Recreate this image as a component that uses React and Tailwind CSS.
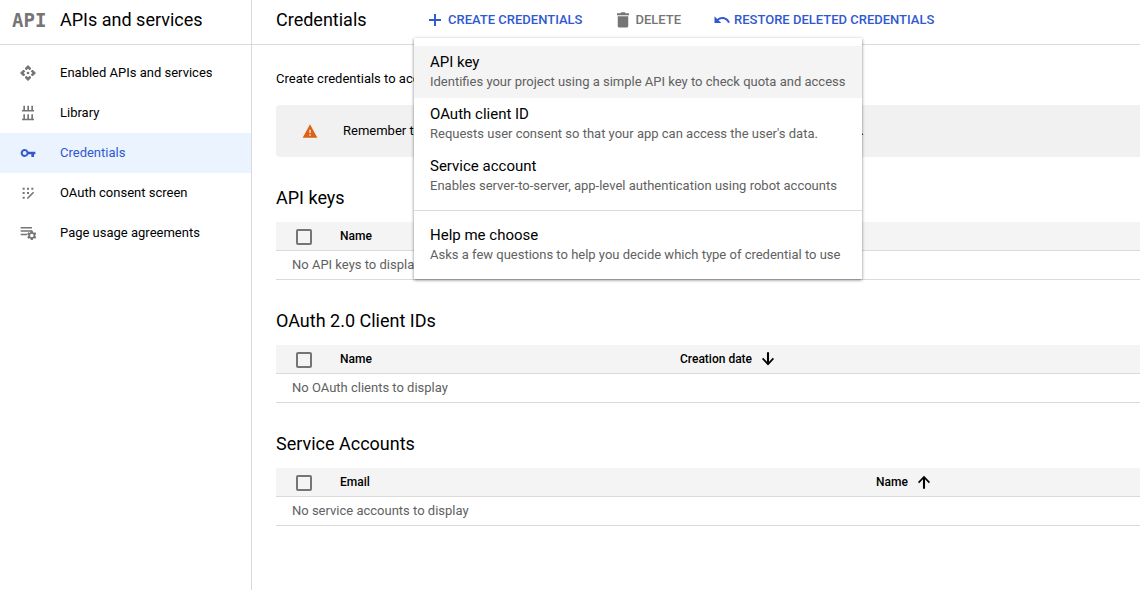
import React, { useState } from 'react'
import clsx from 'clsx'

function Icon({ size = 16, className, children }) {
  return (
    <svg
      width={size}
      height={size}
      viewBox="0 0 24 24"
      fill="currentColor"
      aria-hidden="true"
      className={clsx('shrink-0', className)}
    >
      {children}
    </svg>
  )
}

const ApiIcon = () => (
  <Icon>
    <path d="M12 0 7.500 4.500V6L9.500 8 12 5.500 14.500 8l2-2V4.500zM0 12l4.500 4.500H6l2-2L5.500 12 8 9.500l-2-2H4.500zM24 12l-4.500-4.500H18l-2 2 2.500 2.500-2.500 2.500 2 2h1.500zM12 24l4.500-4.500V18l-2-2-2.500 2.500L9.500 16l-2 2v1.500z" />
    <circle cx="12" cy="12" r="2" />
  </Icon>
)

const LibraryIcon = () => (
  <Icon>
    <path d="M3 7.500h18v2.200H3zM3 20.500h18v2.200H3zM5 1h2.500v7H5zM11 1h2.500v7H11zM17 1h2.500v7H17zM5 14h2.500v7H5zM11 14h2.500v7H11zM17 14h2.500v7H17z" />
  </Icon>
)

const KeyIcon = () => (
  <Icon>
    <path d="M12.650 10A5.990 5.990 0 0 0 7 6c-3.310 0-6 2.690-6 6s2.690 6 6 6a5.990 5.990 0 0 0 5.650-4H17v4h4v-4h2v-4zM7 15a3 3 0 1 1 0-6 3 3 0 0 1 0 6z" />
  </Icon>
)

const ConsentIcon = () => (
  <Icon>
    <path d="M4 4h3v3H4zM10.500 4h3v3h-3zM17 4h3v3h-3zM4 10.500h3v3H4zM10.500 10.500h3v3h-3zM4 17.500h3v3H4zM19.500 10l1.800 1.800-9 9H10.500V19z" />
  </Icon>
)

const AgreementIcon = () => (
  <Icon>
    <path d="M1 3h17v2.200H1zM1 8h17v2.200H1zM1 13h10v2.200H1z" />
    <path
      fillRule="evenodd"
      d="M16.200 8.800h3l.4 2 1.400.8 2-.7 1.500 2.600-1.600 1.400v1.600l1.600 1.400-1.500 2.600-2-.7-1.400.8-.4 2h-3l-.4-2-1.400-.8-2 .7-1.500-2.600 1.600-1.400v-1.600l-1.600-1.400 1.500-2.600 2 .7 1.400-.8zM17.700 13a2.700 2.700 0 1 0 0 5.400 2.700 2.700 0 0 0 0-5.400z"
    />
  </Icon>
)

const PlusIcon = () => (
  <Icon size={18}>
    <path d="M20 13.300h-6.700V20h-2.600v-6.700H4v-2.600h6.700V4h2.600v6.700H20z" />
  </Icon>
)

const TrashIcon = () => (
  <Icon size={18}>
    <path d="M5 20c0 1.200.9 2 2 2h10c1.100 0 2-.8 2-2V7H5zM20 3h-4.500l-1-1.500h-5L8.500 3H4v2.500h16z" />
  </Icon>
)

const UndoIcon = () => (
  <Icon size={18}>
    <path d="M12.500 8c-2.650 0-5.050.990-6.900 2.600L2 7v9h9l-3.620-3.620c1.390-1.160 3.160-1.880 5.120-1.880 3.540 0 6.550 2.310 7.600 5.500l2.370-.780C21.080 11.030 17.150 8 12.500 8z" />
  </Icon>
)

const WarningIcon = () => (
  <Icon size={16} className="text-[#dd6218]">
    <path d="M1 22h22L12 2zm12-3h-2v-2h2zm0-4h-2v-5h2z" />
  </Icon>
)

const SortArrow = ({ up }) => (
  <Icon size={18} className={up ? '' : 'rotate-180'}>
    <path d="M4 12l1.600 1.600 5-5.200V21h2.800V8.400l5 5.200L20 12l-8-8.500z" />
  </Icon>
)

const NAV = [
  { label: 'Enabled APIs and services', icon: ApiIcon },
  { label: 'Library', icon: LibraryIcon },
  { label: 'Credentials', icon: KeyIcon },
  { label: 'OAuth consent screen', icon: ConsentIcon },
  { label: 'Page usage agreements', icon: AgreementIcon },
]

const CREDENTIAL_TYPES = [
  { title: 'API key', text: 'Identifies your project using a simple API key to check quota and access' },
  { title: 'OAuth client ID', text: "Requests user consent so that your app can access the user's data." },
  { title: 'Service account', text: 'Enables server-to-server, app-level authentication using robot accounts' },
]

const SECTIONS = [
  {
    title: 'API keys',
    empty: 'No API keys to display',
    columns: [{ label: 'Name' }],
  },
  {
    title: 'OAuth 2.0 Client IDs',
    empty: 'No OAuth clients to display',
    columns: [{ label: 'Name', width: 'w-[340px]' }, { label: 'Creation date', sort: 'desc' }],
  },
  {
    title: 'Service Accounts',
    empty: 'No service accounts to display',
    columns: [{ label: 'Email', width: 'w-[536px]' }, { label: 'Name', sort: 'asc' }],
  },
]

function MenuItem({ title, text, active }) {
  return (
    <button
      type="button"
      role="menuitem"
      className={clsx('block w-full px-4 py-1.5 text-left hover:bg-[#f4f4f4]', active && 'bg-[#f4f4f4]')}
    >
      <span className="block text-[15px] leading-5 text-black">{title}</span>
      <span className="block text-[13px] leading-5 whitespace-nowrap text-[#616161]">{text}</span>
    </button>
  )
}

function CredentialsTable({ title, empty, columns }) {
  return (
    <section>
      <h2 className="mb-3 text-lg leading-6">{title}</h2>
      <table className="w-full table-fixed border-separate border-spacing-0 text-left">
        <thead className="bg-[#f4f4f4] text-xs">
          <tr>
            <th className="h-[29px] w-16 border-b border-[#dadada] pl-5">
              <input
                type="checkbox"
                aria-label={`Select all: ${title}`}
                className="mt-0.5 block size-4 appearance-none rounded-xs border-2 border-[#757575] checked:bg-[#757575]"
              />
            </th>
            {columns.map((col) => (
              <th key={col.label} className={clsx('border-b border-[#dadada] font-medium', col.width)}>
                <span className="flex items-center gap-[7px]">
                  {col.label}
                  {col.sort && <SortArrow up={col.sort === 'asc'} />}
                </span>
              </th>
            ))}
          </tr>
        </thead>
        <tbody>
          <tr>
            <td
              colSpan={columns.length + 1}
              className="h-[29px] border-b border-[#dadada] pl-4 text-[13px] text-[#616161]"
            >
              {empty}
            </td>
          </tr>
        </tbody>
      </table>
    </section>
  )
}

export default function App() {
  const [menuOpen, setMenuOpen] = useState(true)

  return (
    <div className="flex min-h-screen overflow-x-hidden bg-white font-[Roboto,sans-serif] text-[13px] text-black">
      <aside className="w-[252px] shrink-0 border-r border-[#dadada]">
        <div className="flex h-[45px] items-center border-b border-[#dadada] pb-1 pl-3">
          <span className="w-12 font-['DejaVu_Sans_Mono',monospace] text-[19px] font-bold text-[#757575]">API</span>
          <span className="text-lg">APIs and services</span>
        </div>
        <nav className="pt-2">
          {NAV.map((item) => (
            <a
              key={item.label}
              href="#"
              className={clsx(
                'flex h-10 items-center gap-6 pl-5',
                item.label === 'Credentials' ? 'bg-[#ebf3fe] text-[#3059d0]' : 'hover:bg-gray-50'
              )}
            >
              <span className={item.label === 'Credentials' ? '' : 'text-[#757575]'}>
                <item.icon />
              </span>
              {item.label}
            </a>
          ))}
        </nav>
      </aside>

      <main className="min-w-0 grow">
        <header className="flex h-[45px] items-center border-b border-[#dadada] pb-1 pl-6">
          <h1 className="w-[138px] text-lg">Credentials</h1>
          <div className="relative">
            <button
              type="button"
              onClick={() => setMenuOpen(!menuOpen)}
              className="flex h-9 items-center gap-1 pl-3 font-medium whitespace-nowrap text-[#3059d0]"
            >
              <PlusIcon />
              CREATE CREDENTIALS
            </button>
            {menuOpen && (
              <div
                role="menu"
                className="absolute top-full left-0 z-10 w-[448px] bg-white py-2 shadow-[0_1px_3px_rgba(0,0,0,0.5)]"
              >
                {CREDENTIAL_TYPES.map((item, i) => (
                  <MenuItem key={item.title} {...item} active={i === 0} />
                ))}
                <hr className="my-2 border-[#dadada]" />
                <MenuItem
                  title="Help me choose"
                  text="Asks a few questions to help you decide which type of credential to use"
                />
              </div>
            )}
          </div>
          <button
            type="button"
            className="ml-8 flex h-9 items-center gap-[3px] font-medium text-[#757575]"
          >
            <TrashIcon />
            DELETE
          </button>
          <button
            type="button"
            className="ml-8 flex h-9 items-center gap-[3px] font-medium whitespace-nowrap text-[#3059d0]"
          >
            <UndoIcon />
            RESTORE DELETED CREDENTIALS
          </button>
        </header>

        <div className="pt-6 pl-6">
          <p className="leading-5">Create credentials to access your enabled APIs.</p>
          <div className="mt-4 flex h-[52px] items-center gap-[25px] rounded-l bg-[#f1f1f1] pl-[26px]">
            <WarningIcon />
            <p className="whitespace-nowrap">
              Remember to configure the OAuth consent screen with information about your application.
            </p>
          </div>
          <div className="mt-[29px] flex flex-col gap-[29px] pb-8">
            {SECTIONS.map((section) => (
              <CredentialsTable key={section.title} {...section} />
            ))}
          </div>
        </div>
      </main>
    </div>
  )
}
